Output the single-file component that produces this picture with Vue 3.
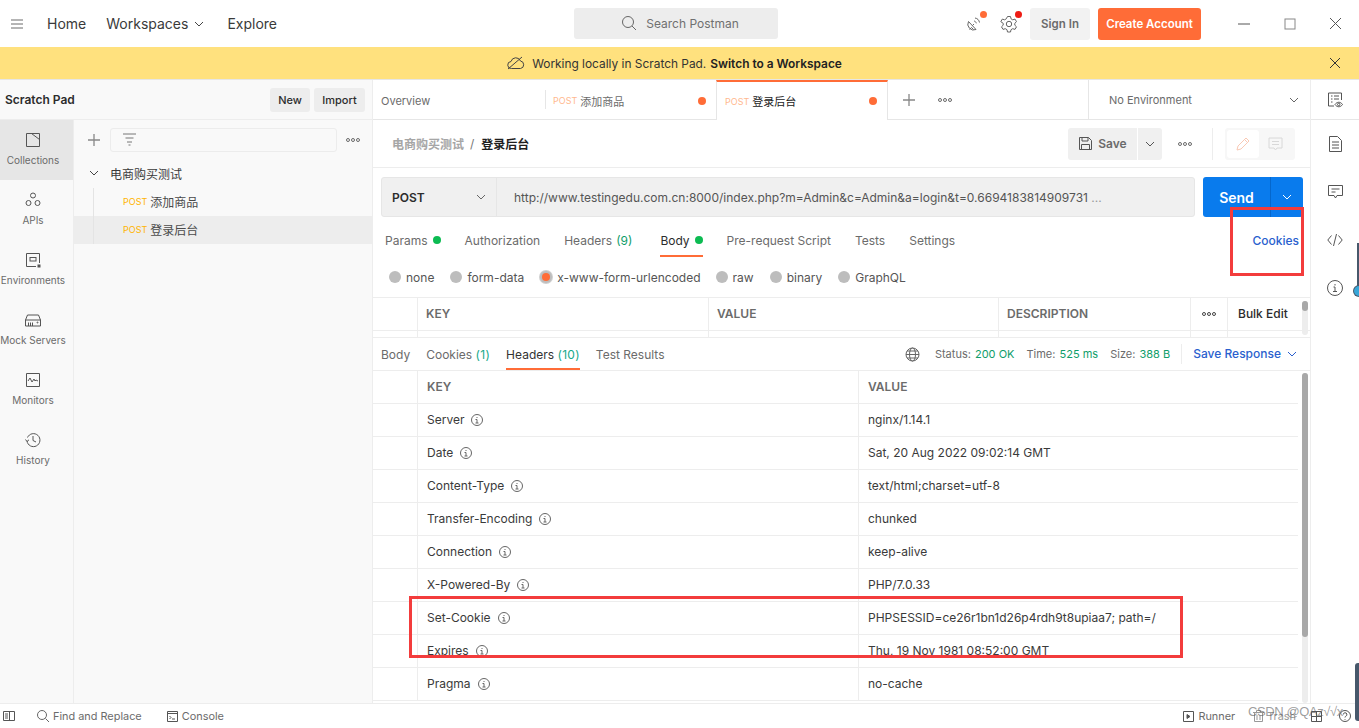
<script setup>
const navItems = [
  { label: 'Collections', active: true, icon: 'col' },
  { label: 'APIs', icon: 'apis' },
  { label: 'Environments', icon: 'env' },
  { label: 'Mock Servers', icon: 'mock' },
  { label: 'Monitors', icon: 'mon' },
  { label: 'History', icon: 'his' },
]
const reqTabs = [
  { label: 'Params', dot: true },
  { label: 'Authorization' },
  { label: 'Headers', count: '(9)' },
  { label: 'Body', dot: true, active: true },
  { label: 'Pre-request Script' },
  { label: 'Tests' },
  { label: 'Settings' },
]
const bodyTypes = [
  { label: 'none' },
  { label: 'form-data' },
  { label: 'x-www-form-urlencoded', on: true },
  { label: 'raw' },
  { label: 'binary' },
  { label: 'GraphQL' },
]
const headers = [
  ['Server', 'nginx/1.14.1'],
  ['Date', 'Sat, 20 Aug 2022 09:02:14 GMT'],
  ['Content-Type', 'text/html;charset=utf-8'],
  ['Transfer-Encoding', 'chunked'],
  ['Connection', 'keep-alive'],
  ['X-Powered-By', 'PHP/7.0.33'],
  ['Set-Cookie', 'PHPSESSID=ce26r1bn1d26p4rdh9t8upiaa7; path=/'],
  ['Expires', 'Thu, 19 Nov 1981 08:52:00 GMT'],
  ['Pragma', 'no-cache'],
]
</script>

<template>
  <div class="app">
    <header class="topbar">
      <div class="top-left">
        <svg class="burger" width="14" height="10" viewBox="0 0 14 10"><path d="M1 1h12M1 5h12M1 9h12" stroke="#6b6b6b" fill="none" /></svg>
        <span class="nav-link">Home</span>
        <span class="nav-link ws">Workspaces
          <svg width="10" height="6" viewBox="0 0 10 6"><path d="M1 1l4 4 4-4" stroke="#444" fill="none" /></svg>
        </span>
        <span class="nav-link">Explore</span>
      </div>
      <div class="search">
        <svg width="16" height="16" viewBox="0 0 16 16"><circle cx="7" cy="7" r="5.500" stroke="#666" fill="none" /><path d="M11 11l4 4" stroke="#666" /></svg>
        <span>Search Postman</span>
      </div>
      <div class="top-right">
        <span class="ico sat">
          <svg width="18" height="18" viewBox="0 0 18 18" fill="none" stroke="#666"><path d="M2.500 6.500a5.800 5.800 0 0 0 7.500 8zM6.500 10.500l1.500-1.500M3.500 14.500l2-2 2 2M8 6c1.200.200 2 1 2.300 2.300M9 3c2.500.400 4 2 4.500 4.500" /></svg>
          <i class="badge orange"></i>
        </span>
        <span class="ico gear">
          <svg width="18" height="18" viewBox="0 0 18 18" fill="none" stroke="#666"><path d="M7.500 1.500h3l.5 2.300 1.700 1 2.300-.7 1.500 2.600-1.700 1.600v1.900l1.700 1.600-1.500 2.600-2.300-.7-1.700 1-.5 2.300h-3l-.5-2.300-1.700-1-2.300.7-1.500-2.600 1.700-1.600V8.300L.8 6.700l1.500-2.600 2.300.7 1.700-1z" /><circle cx="9" cy="9" r="2.700" /></svg>
          <i class="badge red"></i>
        </span>
        <button class="signin">Sign In</button>
        <button class="create">Create Account</button>
        <div class="winctl">
          <svg width="12" height="12" viewBox="0 0 12 12"><path d="M0 6h12" stroke="#555" /></svg>
          <svg width="12" height="12" viewBox="0 0 12 12"><rect x="1" y="1" width="10" height="10" stroke="#888" fill="none" /></svg>
          <svg width="13" height="13" viewBox="0 0 13 13"><path d="M1 1l11 11M12 1L1 12" stroke="#555" fill="none" /></svg>
        </div>
      </div>
    </header>

    <div class="banner">
      <svg width="18" height="14" viewBox="0 0 18 14" fill="none" stroke="#444"><path d="M4.500 12.500a3.500 3.500 0 0 1-.5-7 5 5 0 0 1 9.500-.5 3.800 3.800 0 0 1 0 7.500zM1 13L15 1" /></svg>
      <span>Working locally in Scratch Pad.</span>
      <b>Switch to a Workspace</b>
      <svg class="banner-x" width="12" height="12" viewBox="0 0 12 12"><path d="M1 1l10 10M11 1L1 11" stroke="#333" fill="none" /></svg>
    </div>

    <div class="body-row">
      <aside class="left">
        <div class="left-head">
          <strong>Scratch Pad</strong>
          <button class="gbtn new">New</button>
          <button class="gbtn imp">Import</button>
        </div>
        <div class="left-body">
          <nav class="rail">
            <div v-for="n in navItems" :key="n.label" class="rail-item" :class="{ active: n.active }">
              <svg width="18" height="18" viewBox="0 0 18 18" fill="none" stroke="#555">
                <template v-if="n.icon === 'col'"><path d="M2.500 2.500h13v13h-13zM7.500 2.500l8 6" /></template>
                <template v-else-if="n.icon === 'apis'"><circle cx="9" cy="4.500" r="2.500" /><circle cx="4.500" cy="12" r="2.500" /><circle cx="13.500" cy="12" r="2.500" /></template>
                <template v-else-if="n.icon === 'env'"><path d="M15.500 12V2.500h-13v13H12" /><rect x="6" y="6.500" width="6" height="3.500" /><rect x="13.500" y="13.500" width="3" height="3" fill="#555" stroke="none" /></template>
                <template v-else-if="n.icon === 'mock'"><path d="M1.500 9l2-5h11l2 5v6h-15zM1.500 9h15M4.500 11.500V15M6.500 11.500V15M8.500 11.500V15" /><circle cx="13.500" cy="11.500" r=".5" /></template>
                <template v-else-if="n.icon === 'mon'"><path d="M2.500 2.500h13v13h-13zM4 10l2-3 2 4 2-3 1 2 1-1 2 1" /></template>
                <template v-else><path d="M3 10a6.500 6.500 0 1 0 .5-3.500M1.500 8.500L3 10.500l2-1.700M9 5v4.500l3 1.500" /></template>
              </svg>
              <span>{{ n.label }}</span>
            </div>
          </nav>
          <div class="tree">
            <div class="tree-tools">
              <svg width="14" height="14" viewBox="0 0 14 14"><path d="M7 1v12M1 7h12" stroke="#888" fill="none" stroke-width="1.300" /></svg>
              <div class="filter">
                <svg width="15" height="13" viewBox="0 0 15 13"><path d="M1 1h13M3.500 5h8M5 9h5M6.500 12h2" stroke="#777" fill="none" /></svg>
              </div>
              <span class="dots"><i></i><i></i><i></i></span>
            </div>
            <div class="tree-folder">
              <svg width="10" height="6" viewBox="0 0 10 6"><path d="M1 1l4 4 4-4" stroke="#444" fill="none" /></svg>
              <span>电商购买测试</span>
            </div>
            <div class="tree-item"><em>POST</em><span>添加商品</span></div>
            <div class="tree-item sel"><em>POST</em><span>登录后台</span></div>
          </div>
        </div>
      </aside>

      <main class="main">
        <div class="tabs">
          <div class="tab overview">Overview</div>
          <div class="tab sep"><em>POST</em><span>添加商品</span><i></i></div>
          <div class="tab current"><em>POST</em><span>登录后台</span><i></i></div>
          <div class="tab-tools">
            <svg width="14" height="14" viewBox="0 0 14 14"><path d="M7 1v12M1 7h12" stroke="#888" fill="none" stroke-width="1.300" /></svg>
            <span class="dots"><i></i><i></i><i></i></span>
          </div>
          <div class="env">
            <span>No Environment</span>
            <svg width="10" height="6" viewBox="0 0 10 6"><path d="M1 1l4 4 4-4" stroke="#666" fill="none" /></svg>
          </div>
        </div>

        <div class="crumb">
          <div class="crumb-text"><span class="c1">电商购买测试</span><span class="slash">/</span><span class="c2">登录后台</span></div>
          <div class="crumb-tools">
            <button class="save">
              <svg width="15" height="15" viewBox="0 0 15 15" fill="none" stroke="#555"><path d="M1.500 1.500h9l3 3v9h-12zM4 1.500v3.500h6V1.500M3.500 13.500V8.500h8v5" /></svg>
              Save
            </button>
            <button class="save-drop"><svg width="10" height="6" viewBox="0 0 10 6"><path d="M1 1l4 4 4-4" stroke="#555" fill="none" /></svg></button>
            <span class="dots crumb-dots"><i></i><i></i><i></i></span>
            <span class="vline"></span>
            <div class="mode">
              <span class="mode-on"><svg width="16" height="16" viewBox="0 0 16 16" fill="none" stroke="#f9c9b5"><path d="M2 14l1-4 8-8 3 3-8 8zM9.500 3.500l3 3" /></svg></span>
              <span class="mode-off"><svg width="15" height="14" viewBox="0 0 15 14" fill="none" stroke="#d8d8d8"><path d="M1 1h13v10H9l-1.500 2L6 11H1zM4 4.500h7M4 7.500h7" /></svg></span>
            </div>
          </div>
        </div>

        <div class="url-row">
          <div class="url-box">
            <div class="method"><b>POST</b><svg width="10" height="6" viewBox="0 0 10 6"><path d="M1 1l4 4 4-4" stroke="#666" fill="none" /></svg></div>
            <div class="url">http://www.testingedu.com.cn:8000/index.php?m=Admin&amp;c=Admin&amp;a=login&amp;t=0.6694183814909731 <span class="more">...</span></div>
          </div>
          <div class="send">
            <span>Send</span>
            <span class="send-drop"><svg width="10" height="6" viewBox="0 0 10 6"><path d="M1 1l4 4 4-4" stroke="#fff" fill="none" /></svg></span>
          </div>
        </div>

        <div class="req-tabs">
          <span v-for="t in reqTabs" :key="t.label" class="req-tab" :class="{ active: t.active }">
            {{ t.label }}<small v-if="t.count">{{ t.count }}</small><i v-if="t.dot"></i>
          </span>
          <span class="cookies">Cookies</span>
        </div>

        <div class="radios">
          <label v-for="b in bodyTypes" :key="b.label" class="radio" :class="{ on: b.on }"><i></i>{{ b.label }}</label>
        </div>

        <div class="params">
          <div class="params-grid head">
            <span></span><span>KEY</span><span>VALUE</span><span>DESCRIPTION</span>
            <span class="cell-dots"><span class="dots dark"><i></i><i></i><i></i></span></span>
            <span class="bulk">Bulk Edit</span>
          </div>
          <div class="params-grid stub"><span></span><span></span><span></span><span></span><span></span><span></span></div>
          <div class="track params-track"><div class="thumb"></div></div>
        </div>

        <div class="resp-head">
          <div class="resp-tabs">
            <span>Body</span>
            <span>Cookies&nbsp;<small>(1)</small></span>
            <span class="active">Headers&nbsp;<small>(10)</small></span>
            <span>Test Results</span>
          </div>
          <div class="resp-meta">
            <svg width="15" height="15" viewBox="0 0 15 15" fill="none" stroke="#666"><circle cx="7.500" cy="7.500" r="6.500" /><ellipse cx="7.500" cy="7.500" rx="3" ry="6.500" /><path d="M1 7.500h13M2 4h11M2 11h11" /></svg>
            <span class="stat">Status: <b>200 OK</b></span>
            <span class="stat">Time: <b>525 ms</b></span>
            <span class="stat">Size: <b>388 B</b></span>
            <span class="vline short"></span>
            <span class="save-resp">Save Response
              <svg width="10" height="6" viewBox="0 0 10 6"><path d="M1 1l4 4 4-4" stroke="#2a5fce" fill="none" /></svg>
            </span>
          </div>
        </div>

        <div class="resp-table">
          <div class="row head"><span></span><span>KEY</span><span>VALUE</span></div>
          <div v-for="h in headers" :key="h[0]" class="row">
            <span></span>
            <span class="key">{{ h[0] }}
              <svg width="12" height="12" viewBox="0 0 12 12" fill="none" stroke="#666"><circle cx="6" cy="6" r="5.500" /><path d="M4.500 5.500H6V9M4.500 9h3M6 3v1" /></svg>
            </span>
            <span>{{ h[1] }}</span>
          </div>
          <div class="track"><div class="thumb"></div></div>
        </div>
      </main>

      <aside class="right">
        <div class="right-top">
          <svg width="16" height="16" viewBox="0 0 16 16" fill="none" stroke="#555"><path d="M14.500 8V1h-13v13H7M4 4h1.500M7 4h5M4 7h1.500M7 7h5M4 10h1.500" /><path d="M8 12.500c2-3 5.500-3 7.500 0-2 3-5.500 3-7.500 0z" /><circle cx="11.700" cy="12.500" r="1.200" /></svg>
        </div>
        <div class="right-list">
          <svg width="13" height="16" viewBox="0 0 13 16" fill="none" stroke="#555"><path d="M.5.500h8l4 4v11H.5zM3 6h7M3 9h7M3 12h7" /></svg>
          <svg width="15" height="15" viewBox="0 0 15 15" fill="none" stroke="#555"><path d="M.5.500h14v10H9L7.500 13 6 10.500H.5zM3.500 4h8M3.500 7h4" /></svg>
          <svg width="16" height="12" viewBox="0 0 16 12" fill="none" stroke="#555"><path d="M4.500 1.500L.8 6l3.700 4.500M11.500 1.500L15.200 6l-3.700 4.500M9.500 0l-3 12" /></svg>
          <svg width="16" height="16" viewBox="0 0 16 16" fill="none" stroke="#555"><circle cx="8" cy="8" r="7.500" /><path d="M6.500 7H8v4.500M6 11.500h4M8 4v1.500" /></svg>
        </div>
      </aside>
    </div>

    <footer class="status">
      <svg width="12" height="10" viewBox="0 0 12 10" fill="none" stroke="#555"><path d="M.5.500h11v9H.5zM6.500.500v9M2 3h3M2 5h3M2 7h3" /></svg>
      <span class="st find">
        <svg width="12" height="12" viewBox="0 0 12 12" fill="none" stroke="#666"><circle cx="5" cy="5" r="4.500" /><path d="M8.500 8.500L12 12" /></svg>
        Find and Replace
      </span>
      <span class="st">
        <svg width="11" height="11" viewBox="0 0 11 11" fill="none" stroke="#555"><path d="M.5.500h10v10H.5zM.5 2.500h10M2.500 5l1.500 1.500L2.500 8M5 8h3" /></svg>
        Console
      </span>
      <span class="st runner">
        <svg width="11" height="11" viewBox="0 0 11 11" fill="none" stroke="#555"><path d="M.5.500h10v10H.5z" /><path d="M4 3.500l3 2-3 2z" fill="#555" /></svg>
        Runner
      </span>
      <span class="st trash">
        <svg width="11" height="12" viewBox="0 0 11 12" fill="none" stroke="#999"><path d="M0 2.500h11M3.500 2.500V.500h4v2M1.500 2.500v9h8v-9M4 5v5M7 5v5" /></svg>
        Trash
      </span>
      <svg class="grid-ico" width="11" height="11" viewBox="0 0 11 11" fill="none" stroke="#555"><path d="M.5.500h10v10H.5zM5.500.500v10M.5 5.500h10" /></svg>
      <svg width="12" height="12" viewBox="0 0 12 12" fill="none" stroke="#555"><circle cx="6" cy="6" r="5.500" /><path d="M4.300 4.500a1.800 1.800 0 1 1 2.500 1.700c-.6.300-.8.700-.8 1.300M6 9v.8" /></svg>
    </footer>

    <div class="mark mark-cookies"></div>
    <div class="mark mark-setcookie"></div>
    <div class="sliver s1"></div>
    <div class="knob"></div>
    <div class="sliver s2"></div>
    <div class="wm">CSDN @QAz√√x</div>
  </div>
</template>

<style>
body { margin: 0; background: #fff; }
</style>

<style scoped>
.app {
  position: relative;
  width: 1359px;
  height: 728px;
  overflow: hidden;
  display: flex;
  flex-direction: column;
  font: 12px Inter, "Noto Sans CJK SC", sans-serif;
  color: #6b6b6b;
  background: #fff;
}
button { font: inherit; border: 0; cursor: pointer; padding: 0; }
em { font-style: normal; }
i { display: block; }

.topbar { height: 47px; flex: none; display: flex; align-items: center; }
.top-left { width: 574px; display: flex; align-items: center; padding-left: 10px; box-sizing: border-box; }
.burger { margin-right: 23px; }
.nav-link { font-size: 14px; color: #3a3a3a; margin-right: 20px; display: flex; align-items: center; gap: 6px; }
.nav-link.ws { margin-right: 23px; }
.search { width: 204px; height: 31px; background: #ededed; border-radius: 3px; display: flex; align-items: center; justify-content: center; gap: 9px; color: #707070; font-size: 12px; margin-top: -1px; padding-left: 8px; box-sizing: border-box; }
.top-right { flex: 1; display: flex; align-items: center; justify-content: flex-end; height: 32px; }
.ico { position: relative; width: 18px; height: 18px; display: block; }
.sat { margin-right: 16px; }
.gear { margin-right: 12px; }
.badge { position: absolute; width: 7px; height: 7px; border-radius: 50%; top: -4px; right: -3px; }
.orange { background: #ff6c37; }
.red { background: #ee1c14; right: -4px; }
.signin { width: 60px; height: 32px; background: #f2f2f2; color: #6b6b6b; border-radius: 3px; font-weight: 600; font-size: 11.500px; margin-right: 8px; }
.create { width: 103px; height: 32px; background: #ff6c37; color: #fff; border-radius: 3px; font-weight: 600; font-size: 11.500px; }
.winctl { width: 158px; padding: 0 17px 0 37px; box-sizing: border-box; display: flex; justify-content: space-between; align-items: center; }

.banner { height: 32px; flex: none; background: #ffe17e; border-bottom: 1px solid #e6e6e6; display: flex; align-items: center; justify-content: center; gap: 4px; color: #333; position: relative; padding-right: 10px; font-size: 11.900px; }
.banner svg:first-child { margin-right: 3px; }
.banner b { font-weight: 600; color: #222; }
.banner-x { position: absolute; right: 18px; top: 10px; }

.body-row { flex: 1; min-height: 0; display: flex; }
.left { width: 373px; flex: none; background: #f9f9f9; border-right: 1px solid #ededed; box-sizing: border-box; display: flex; flex-direction: column; }
.left-head { height: 40px; flex: none; display: flex; align-items: center; padding: 0 7px 0 5px; border-bottom: 1px solid #ededed; box-sizing: border-box; gap: 4px; }
.left-head strong { flex: 1; font-weight: 600; color: #2c2c2c; font-size: 12px; }
.gbtn { height: 24px; background: #ededed; border-radius: 3px; color: #2c2c2c; font-size: 11px; font-weight: 500; }
.gbtn.new { width: 40px; }
.gbtn.imp { width: 51px; }
.left-body { flex: 1; display: flex; min-height: 0; }
.rail { width: 74px; flex: none; border-right: 1px solid #ededed; box-sizing: border-box; }
.rail-item { height: 60px; display: flex; flex-direction: column; align-items: center; justify-content: center; gap: 5px; font-size: 10px; color: #6b6b6b; padding: 0 7px 3px 0; box-sizing: border-box; white-space: nowrap; }
.rail-item.active { background: #e6e6e6; }
.tree { flex: 1; min-width: 0; }
.tree-tools { height: 39px; display: flex; align-items: center; padding: 0 12px 0 13px; gap: 9px; }
.filter { flex: 1; height: 22px; background: #f9f9f9; border: 1px solid #ececec; border-radius: 3px; display: flex; align-items: center; padding-left: 11px; }
.dots { display: inline-flex; gap: 1px; align-items: center; }
.dots i { width: 2px; height: 2px; border: 1px solid #6b6b6b; border-radius: 50%; }
.tree-folder { height: 29px; display: flex; align-items: center; gap: 11px; padding: 0 0 1px 15px; box-sizing: border-box; color: #3a3a3a; font-size: 12px; }
.tree-item { height: 28px; display: flex; align-items: center; padding: 0 0 2px 49px; box-sizing: border-box; gap: 3px; color: #4a4a4a; font-size: 12px; position: relative; }
.tree-item::before { content: ''; position: absolute; left: 19px; top: 0; bottom: 0; width: 1px; background: #e4e4e4; }
.tree-item em { color: #ffb400; font-size: 9px; }
.tree-item.sel { background: #ededed; }

.main { flex: 1; min-width: 0; display: flex; flex-direction: column; }
.tabs { height: 40px; flex: none; display: flex; border-bottom: 1px solid #e6e6e6; box-sizing: border-box; }
.tab { width: 172px; display: flex; align-items: center; box-sizing: border-box; padding: 2px 0 0 8px; gap: 3px; color: #6b6b6b; font-size: 11px; position: relative; }
.tab.sep { width: 171px; }
.tab em { color: #ffb98f; font-size: 9px; }
.tab span { font-size: 11px; color: #6b6b6b; flex: 1; }
.tab i { width: 8px; height: 8px; border-radius: 50%; background: #ff6c37; margin-right: 10px; }
.tab.sep::before { content: ''; position: absolute; left: 0; top: 10px; bottom: 10px; width: 1px; background: #e6e6e6; }
.tab.current { background: #fff; border-top: 2px solid #ff6c37; border-left: 1px solid #e6e6e6; border-right: 1px solid #e6e6e6; height: 40px; padding-top: 0; }
.tab.current span { color: #222; }
.tab-tools { width: 200px; display: flex; align-items: center; gap: 22px; padding-left: 14px; box-sizing: border-box; }
.env { flex: 1; border-left: 1px solid #e6e6e6; display: flex; align-items: center; justify-content: space-between; padding: 0 11px 0 20px; font-size: 11px; color: #6b6b6b; }

.crumb { height: 48px; flex: none; border-bottom: 1px solid #ededed; box-sizing: border-box; display: flex; align-items: center; padding: 0 15px 0 19px; }
.crumb-text { flex: 1; display: flex; align-items: center; font-size: 12px; }
.c1 { color: #a6a6a6; font-weight: 600; }
.slash { margin: 0 7px 0 6px; color: #777; }
.c2 { color: #1f1f1f; font-weight: 600; }
.crumb-tools { display: flex; align-items: center; height: 32px; }
.save { width: 69px; height: 32px; background: #f0f0f0; border-radius: 3px 0 0 3px; display: flex; align-items: center; justify-content: center; gap: 5px; color: #6b6b6b; font-weight: 600; font-size: 12px; }
.save-drop { width: 24px; height: 32px; background: #f0f0f0; margin-left: 1px; border-radius: 0 3px 3px 0; display: flex; align-items: center; justify-content: center; }
.crumb-dots { margin: 0 20px 0 16px; }
.vline { width: 1px; height: 32px; background: #ededed; margin-right: 12px; }
.vline.short { height: 20px; margin: 0 -1px 0 -1px; }
.mode { width: 70px; height: 32px; background: #f7f7f7; border-radius: 3px; display: flex; align-items: center; padding: 0 2px; box-sizing: border-box; }
.mode span { height: 28px; width: 32px; display: flex; align-items: center; justify-content: center; border-radius: 3px; }
.mode-on { background: #fff; }

.url-row { flex: none; padding: 9px 7px 0 8px; display: flex; gap: 8px; }
.url-box { flex: 1; height: 40px; background: #f0f0f0; border: 1px solid #e6e6e6; border-radius: 3px; box-sizing: border-box; display: flex; align-items: center; min-width: 0; }
.method { width: 115px; height: 38px; border-right: 1px solid #e6e6e6; box-sizing: border-box; display: flex; align-items: center; justify-content: space-between; padding: 0 10px; flex: none; }
.method b { color: #2c2c2c; font-weight: 600; }
.url { padding-left: 17px; color: #555; white-space: nowrap; font-size: 12px; overflow: hidden; }
.more { color: #999; }
.send { width: 100px; height: 40px; background: #097bed; border-radius: 3px; color: #fff; font-weight: 600; font-size: 14px; display: flex; align-items: center; flex: none; }
.send > span:first-child { flex: 1; text-align: center; }
.send-drop { width: 33px; height: 40px; border-left: 1px solid #0567cc; display: flex; align-items: center; justify-content: center; box-sizing: border-box; }

.req-tabs { height: 36px; flex: none; margin-top: 5px; display: flex; align-items: center; padding: 0 11px 0 12px; gap: 24px; }
.req-tab { height: 36px; display: flex; align-items: center; gap: 4px; position: relative; box-sizing: border-box; }
.req-tab small { font-size: 12px; color: #0f9d6a; margin-right: 4px; }
.req-tab i { width: 8px; height: 8px; border-radius: 50%; background: #0cbb52; margin-left: 1px; }
.req-tab.active { color: #2c2c2c; }
.req-tab.active::after { content: ''; position: absolute; left: 0; right: 0; bottom: 1px; height: 2px; background: #ff6c37; }
.cookies { margin-left: auto; color: #2a5fce; font-weight: 500; }

.radios { height: 40px; flex: none; display: flex; align-items: center; padding: 0 0 1px 16px; gap: 16px; border-bottom: 1px solid #ededed; box-sizing: border-box; }
.radio { display: flex; align-items: center; gap: 5px; color: #555; }
.radio i { width: 12px; height: 12px; border-radius: 50%; background: #bdbdbd; display: flex; align-items: center; justify-content: center; }
.radio.on { margin-right: -1px; }
.radio.on i { box-shadow: 0 0 0 1px #cfcfcf; }
.radio.on i::after { content: ''; width: 8px; height: 8px; border-radius: 50%; background: #ff6c37; }

.params { height: 40px; flex: none; position: relative; border-bottom: 1px solid #ededed; box-sizing: border-box; }
.params-grid { display: grid; grid-template-columns: 45px 291px 290px 192px 37px 70px; box-sizing: border-box; }
.params-grid > span { border-right: 1px solid #ededed; box-sizing: border-box; }
.params-grid > span:last-child { border-right: 0; }
.params-grid.head { height: 33px; border-bottom: 1px solid #ededed; line-height: 32px; font-weight: 600; color: #6b6b6b; }
.params-grid.head > span { padding-left: 8px; }
.params-grid.stub { height: 6px; }
.params-grid.head > .bulk { color: #2c2c2c; font-weight: 500; padding-left: 10px; }
.params-grid.head > .cell-dots { padding-left: 11px; display: flex; align-items: center; }
.dots.dark i { border-color: #444; }

.track { position: absolute; right: 2px; top: 2px; bottom: 0; width: 6px; background: #ededed; border-radius: 3px; }
.thumb { background: #a8a8a8; border-radius: 3px; width: 6px; height: 264px; }
.params-track { top: 3px; bottom: 2px; }
.params-track .thumb { height: 10px; }

.resp-head { height: 33px; flex: none; display: flex; align-items: stretch; border-bottom: 1px solid #ededed; padding: 0 13px 0 8px; box-sizing: border-box; justify-content: space-between; }
.resp-tabs { display: flex; gap: 16px; align-items: stretch; }
.resp-tabs span { display: flex; align-items: center; position: relative; }
.resp-tabs small { font-size: 12px; color: #17a98a; letter-spacing: .3px; }
.resp-tabs .active { color: #333; }
.resp-tabs .active::after { content: ''; position: absolute; left: 0; right: 0; bottom: 0; height: 2px; background: #ff6c37; }
.resp-meta { display: flex; align-items: center; gap: 12px; font-size: 11px; }
.resp-meta > svg { margin-right: 3px; }
.stat b { font-weight: 400; color: #0f9d6a; margin-left: 1px; }
.save-resp { color: #2a5fce; font-size: 12px; font-weight: 500; display: flex; align-items: center; gap: 6px; padding-bottom: 1px; }

.resp-table { flex: 1; min-height: 0; position: relative; overflow: hidden; padding-right: 12px; }
.row { height: 33px; display: grid; grid-template-columns: 45px 441px 1fr; border-bottom: 1px solid #ededed; box-sizing: border-box; align-items: stretch; color: #3a3a3a; }
.row > span { border-right: 1px solid #ededed; display: flex; align-items: center; padding: 0 0 1px 9px; box-sizing: border-box; gap: 7px; }
.row > span:last-child { border-right: 0; }
.row.head { font-weight: 600; color: #6b6b6b; }

.right { width: 49px; flex: none; border-left: 1px solid #ededed; box-sizing: border-box; display: flex; flex-direction: column; }
.right-top { height: 40px; border-bottom: 1px solid #e6e6e6; box-sizing: border-box; display: flex; align-items: center; justify-content: center; }
.right-list { display: flex; flex-direction: column; align-items: center; padding-top: 16px; }
.right-list svg { display: block; }
.right-list svg:nth-child(2) { margin-top: 33px; }
.right-list svg:nth-child(3) { margin-top: 34px; }
.right-list svg:nth-child(4) { margin-top: 34px; }

.status { height: 25px; flex: none; border-top: 1px solid #ededed; box-sizing: border-box; display: flex; align-items: center; padding: 0 8px 0 3px; font-size: 10.900px; color: #6b6b6b; }
.st { display: flex; align-items: center; gap: 4px; }
.find { margin-left: 22px; margin-right: 25px; }
.runner { margin-left: auto; margin-right: 18px; }
.trash { color: #999; margin-right: 15px; gap: 3px; }
.grid-ico { margin-right: 17px; }

.mark { position: absolute; border: 3px solid #f33c3c; box-sizing: border-box; pointer-events: none; }
.mark-cookies { left: 1230px; top: 207px; width: 74px; height: 69px; }
.mark-setcookie { left: 409px; top: 596px; width: 774px; height: 62px; }
.sliver { position: absolute; right: 0; width: 2px; background: #47586b; }
.s1 { top: 243px; height: 46px; }
.knob { position: absolute; left: 1354px; top: 286px; width: 10px; height: 10px; border-radius: 50%; background: #37a6d8; box-shadow: 0 0 0 1px #47586b; }
.s2 { top: 663px; height: 58px; width: 4px; border-radius: 3px 0 0 3px; }
.wm { position: absolute; left: 1248px; top: 704px; font: 13px "Liberation Sans", sans-serif; letter-spacing: -.4px; color: rgba(90, 90, 90, .6); white-space: nowrap; }
</style>
